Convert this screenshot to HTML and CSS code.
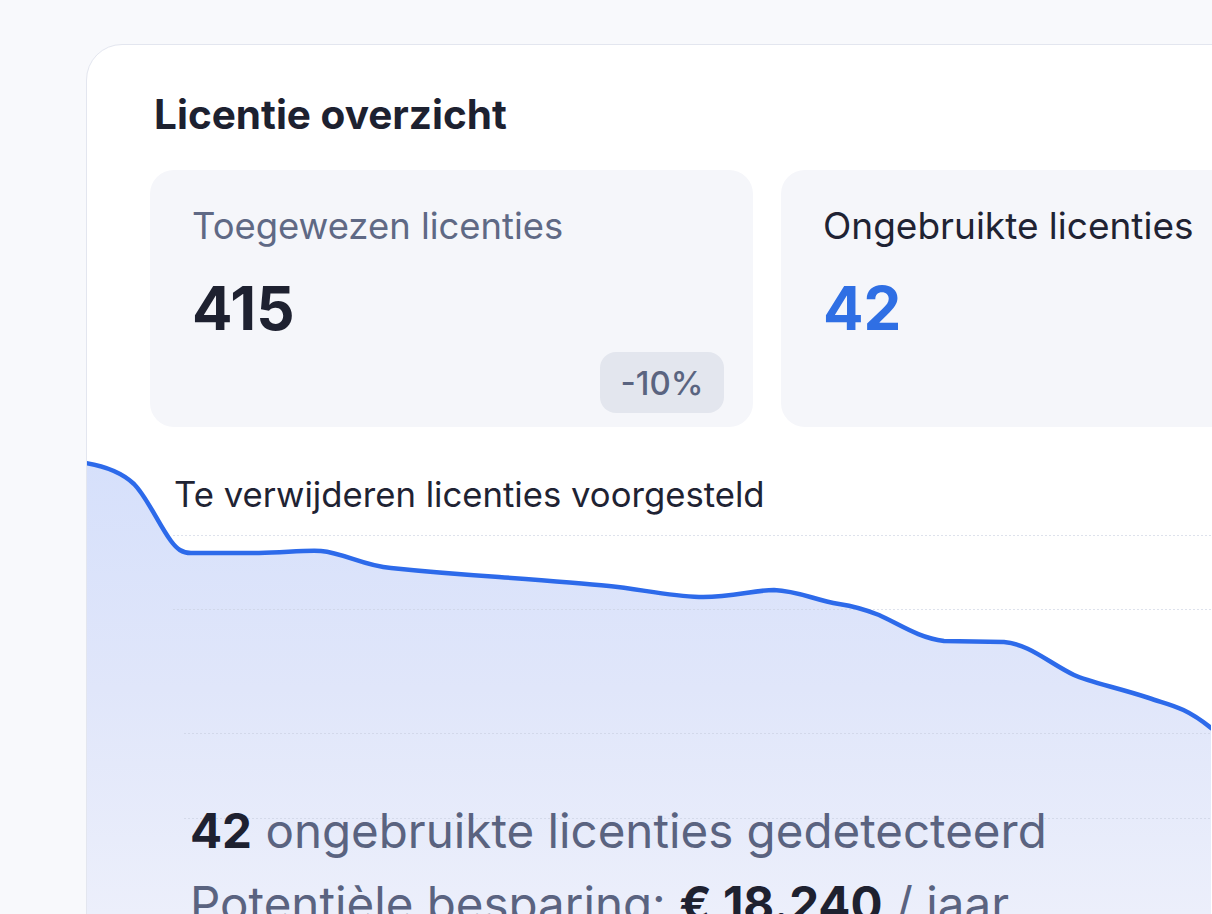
FILE: index.html
```html
<!DOCTYPE html>
<html lang="nl">
  <head>
    <meta charset="UTF-8" />
    <meta name="viewport" content="width=device-width, initial-scale=1.0" />
    <title>Licentie overzicht</title>
    <link rel="stylesheet" href="styles.css">
  </head>
  <body>
    <div class="page">
      <div class="card">
        <h1 class="title">Licentie overzicht</h1>

        <div class="tiles">
          <div class="tile">
            <div class="tile-label muted">Toegewezen licenties</div>
            <div class="tile-value">415</div>
            <span class="badge">-10%</span>
          </div>
          <div class="tile">
            <div class="tile-label">Ongebruikte licenties</div>
            <div class="tile-value blue">42</div>
          </div>
        </div>

        <div class="chart">
          <svg class="chart-bg" width="1125" height="474" viewBox="87 440 1125 474">
            <defs>
              <linearGradient id="fill" x1="0" y1="0" x2="0" y2="1">
                <stop offset="0" stop-color="#d6e0fb" />
                <stop offset="0.5" stop-color="#e0e6fa" />
                <stop offset="1" stop-color="#eceffb" />
              </linearGradient>
            </defs>
            <path fill="url(#fill)" d="M86,463 C105,466 122,472 135,484 C148,497 160,525 172,541 C178,549 183,553 192,553 L260,553 C290,552 310,550 322,551 C345,553 365,566 392,568 C430,572 470,575 500,577 C540,580 580,583 610,586 C640,589 670,596 700,597 C730,598 755,590 775,590 C800,591 815,600 840,604 C860,607 870,611 880,615 C900,624 920,638 945,641 L1005,642 C1030,644 1050,663 1075,675 C1090,682 1120,688 1150,698 C1170,705 1185,706 1212,728 L1212,914 L86,914 Z" />
            <g stroke="#c9cfe0" stroke-width="1" stroke-dasharray="2 2" opacity="0.6">
              <line x1="174" y1="535.5" x2="1212" y2="535.5" />
              <line x1="174" y1="609.5" x2="1212" y2="609.5" />
              <line x1="185" y1="733.5" x2="1212" y2="733.5" />
              <line x1="185" y1="818.5" x2="1212" y2="818.5" />
            </g>
            <path fill="none" stroke="#2d6aea" stroke-width="4.5" stroke-linecap="round" stroke-linejoin="round" d="M86,463 C105,466 122,472 135,484 C148,497 160,525 172,541 C178,549 183,553 192,553 L260,553 C290,552 310,550 322,551 C345,553 365,566 392,568 C430,572 470,575 500,577 C540,580 580,583 610,586 C640,589 670,596 700,597 C730,598 755,590 775,590 C800,591 815,600 840,604 C860,607 870,611 880,615 C900,624 920,638 945,641 L1005,642 C1030,644 1050,663 1075,675 C1090,682 1120,688 1150,698 C1170,705 1185,706 1212,728" />
          </svg>

          <div class="chart-label">Te verwijderen licenties voorgesteld</div>

          <div class="summary">
            <p class="summary-line"><strong>42</strong> ongebruikte licenties gedetecteerd</p>
            <p class="summary-line">Potentièle besparing: <strong>€ 18.240</strong> / jaar</p>
          </div>
        </div>
      </div>
    </div>
  </body>
</html>
```

FILE: styles.css
```css
* {
  box-sizing: border-box;
}
body {
  margin: 0;
  font-family: Inter, "Noto Sans", sans-serif;
  background-color: #f8f9fc;
  height: 914px;
  overflow: hidden;
}
.page {
  padding: 44px 0 0 86px;
}
.card {
  width: 1300px;
  height: 1000px;
  background-color: #fff;
  border: 1px solid #e3e6ef;
  border-radius: 36px;
  overflow: hidden;
}
.title {
  margin: 0;
  padding: 46px 0 0 67px;
  font-size: 40.5px;
  line-height: 48px;
  font-weight: 700;
  color: #1d2130;
}
.tiles {
  display: flex;
  gap: 28px;
  margin-top: 31px;
  padding-left: 63px;
}
.tile {
  width: 603px;
  height: 257px;
  display: flex;
  flex-direction: column;
  padding: 34px 29px 14px 42px;
  background-color: #f5f6fa;
  border-radius: 24px;
}
.tile-label {
  font-size: 37px;
  line-height: 44px;
  color: #1f2333;
  white-space: nowrap;
}
.tile-label.muted {
  font-size: 36.4px;
  color: #5f6985;
}
.tile-value {
  margin-top: 24px;
  font-size: 60px;
  line-height: 72px;
  font-weight: 700;
  color: #1e2130;
}
.tile-value.blue {
  color: #2f6fe4;
}
.badge {
  margin-top: auto;
  align-self: flex-end;
  width: 124px;
  height: 61px;
  display: flex;
  align-items: center;
  justify-content: center;
  border-radius: 16px;
  background-color: #e3e6ee;
  color: #5a6480;
  font-size: 33px;
  font-weight: 500;
}
.chart {
  position: relative;
  margin-top: 13px;
  height: 474px;
}
.chart-bg {
  position: absolute;
  left: -1px;
  top: 0;
}
.chart-label {
  position: relative;
  padding: 33px 0 0 87px;
  font-size: 34.7px;
  line-height: 42px;
  color: #1f2333;
}
.summary {
  position: relative;
  padding: 279px 0 0 103px;
}
.summary-line {
  margin: 0;
  font-size: 47.5px;
  line-height: 73px;
  color: #5a6380;
  white-space: nowrap;
}
.summary-line strong {
  font-weight: 700;
  color: #1e2130;
}
```
